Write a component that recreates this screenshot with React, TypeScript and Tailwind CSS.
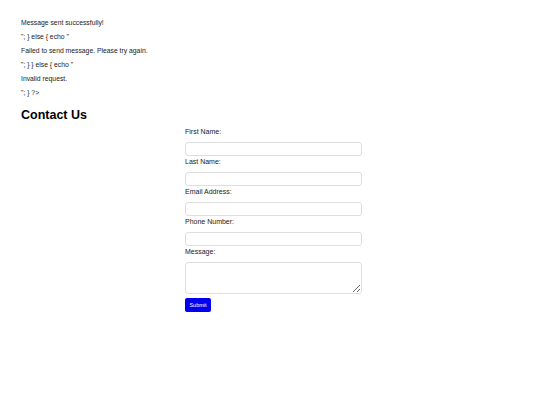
import React from 'react';

const messages = [
  'Message sent successfully!',
  '"; } else { echo "',
  'Failed to send message. Please try again.',
  '"; } } else { echo "',
  'Invalid request.',
  '"; } ?>',
];

const fields = [
  { label: 'First Name:', type: 'text' },
  { label: 'Last Name:', type: 'text' },
  { label: 'Email Address:', type: 'email' },
  { label: 'Phone Number:', type: 'tel' },
];

export default function App() {
  return (
    <div className="min-h-[405px] w-[540px] bg-white text-[#1a1a1a] font-['Liberation_Sans',Arial,sans-serif]">
      <div className="pt-[16px] pl-[21px]">
        {messages.map((m, i) => (
          <div key={i} className="h-[14px] text-[6.8px] leading-[14px]">
            {m}
          </div>
        ))}
        <h2 className="mt-[7px] h-[16px] text-[12.5px] font-bold leading-[16px] text-black">Contact Us</h2>
      </div>

      {/* Form */}
      <form className="ml-[185px] mt-[4px] flex w-[177px] flex-col" onSubmit={(e) => e.preventDefault()}>
        {fields.map((f) => (
          <div key={f.label} className="mb-[1px] flex flex-col">
            <label className="h-[10px] text-[7px] leading-[10px] text-[#222]">{f.label}</label>
            <input
              type={f.type}
              className="mt-[5px] h-[14px] rounded-[3px] border border-[#dedede] bg-white outline-none"
            />
          </div>
        ))}
        <div className="flex flex-col">
          <label className="h-[10px] text-[7px] leading-[10px] text-[#222]">Message:</label>
          <textarea className="mt-[5px] h-[32px] rounded-[3px] border border-[#dedede] bg-white outline-none" />
        </div>
        <button
          type="submit"
          className="mt-[4px] flex h-[14px] w-[26px] items-center justify-center rounded-[2px] bg-[#0000ee] text-[5.5px] text-white"
        >
          Submit
        </button>
      </form>
    </div>
  );
}
